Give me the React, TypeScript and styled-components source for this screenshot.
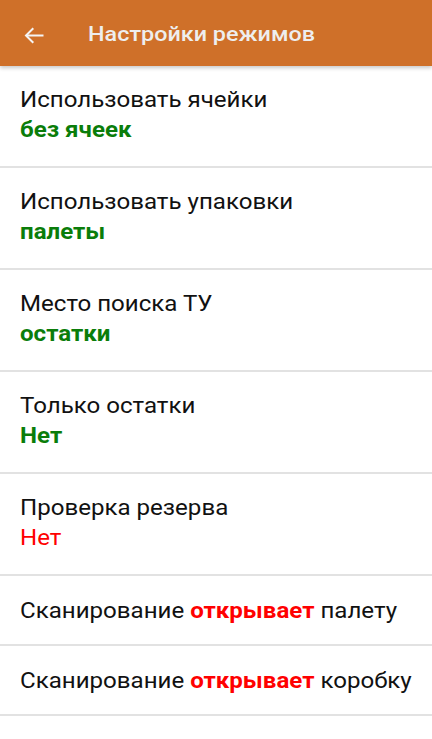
import React from "react";
import styled, { createGlobalStyle } from "styled-components";

const Global = createGlobalStyle`
  html, body { margin: 0; padding: 0; background: #ffffff; }
  body { font-family: Roboto, "Noto Sans", Arial, sans-serif; }
  * { box-sizing: border-box; }
`;

const Screen = styled.div`
  width: 432px;
  min-height: 739px;
  background: #ffffff;
  display: flex;
  flex-direction: column;
  overflow: hidden;
`;

const AppBar = styled.header`
  position: relative;
  z-index: 1;
  height: 66px;
  background: #cf7029;
  display: flex;
  align-items: center;
  padding-left: 24px;
  box-shadow: 0 2px 4px rgba(0, 0, 0, 0.22);
`;

const BackButton = styled.button`
  width: 20px;
  height: 17px;
  margin-top: 4px;
  padding: 0;
  border: 0;
  background: none;
  display: flex;
  color: #f4f4f4;
`;

const Title = styled.h1`
  margin: 1px 0 0 44px;
  font-family: Roboto, sans-serif;
  font-weight: 500;
  font-size: 20.5px;
  line-height: 24px;
  color: #eeeeee;
  transform: scaleX(1.14);
  transform-origin: left center;
  white-space: nowrap;
`;

const List = styled.div`
  display: flex;
  flex-direction: column;
`;

const Row = styled.div<{ $single?: boolean }>`
  height: ${(p) => (p.$single ? 70 : 102)}px;
  padding: ${(p) => (p.$single ? "23px 20px 0" : "22px 20px 0")};
  border-bottom: 2px solid #e2e2e2;
  display: flex;
  flex-direction: column;
`;

const Label = styled.div`
  font-size: 21.5px;
  line-height: 24px;
  color: #111111;
  transform: scaleX(1.12);
  transform-origin: left center;
  white-space: nowrap;
`;

const Value = styled(Label)<{ $color: string; $bold?: boolean }>`
  margin-top: 6px;
  color: ${(p) => p.$color};
  font-weight: ${(p) => (p.$bold ? 700 : 400)};
`;

const Accent = styled.span`
  color: #ff0000;
  font-weight: 700;
`;

const GREEN = "#0a7d0a";
const RED = "#ff0000";

const items = [
  { label: "Использовать ячейки", value: "без ячеек", color: GREEN, bold: true },
  { label: "Использовать упаковки", value: "палеты", color: GREEN, bold: true },
  { label: "Место поиска ТУ", value: "остатки", color: GREEN, bold: true },
  { label: "Только остатки", value: "Нет", color: GREEN, bold: true },
  { label: "Проверка резерва", value: "Нет", color: RED, bold: false },
];

const scans = ["палету", "коробку"];

export default function App() {
  return (
    <Screen>
      <Global />
      <AppBar>
        <BackButton aria-label="Назад">
          <svg width="20" height="17" viewBox="0 0 20 17" fill="none" stroke="currentColor" strokeWidth="2">
            <path d="M19.5 8.5H2" />
            <path d="M9.3 1.2L2 8.5l7.3 7.3" />
          </svg>
        </BackButton>
        <Title>Настройки режимов</Title>
      </AppBar>
      <List>
        {items.map((it) => (
          <Row key={it.label}>
            <Label>{it.label}</Label>
            <Value $color={it.color} $bold={it.bold}>
              {it.value}
            </Value>
          </Row>
        ))}
        {scans.map((s) => (
          <Row key={s} $single>
            <Label>
              Сканирование <Accent>открывает</Accent> {s}
            </Label>
          </Row>
        ))}
      </List>
    </Screen>
  );
}
